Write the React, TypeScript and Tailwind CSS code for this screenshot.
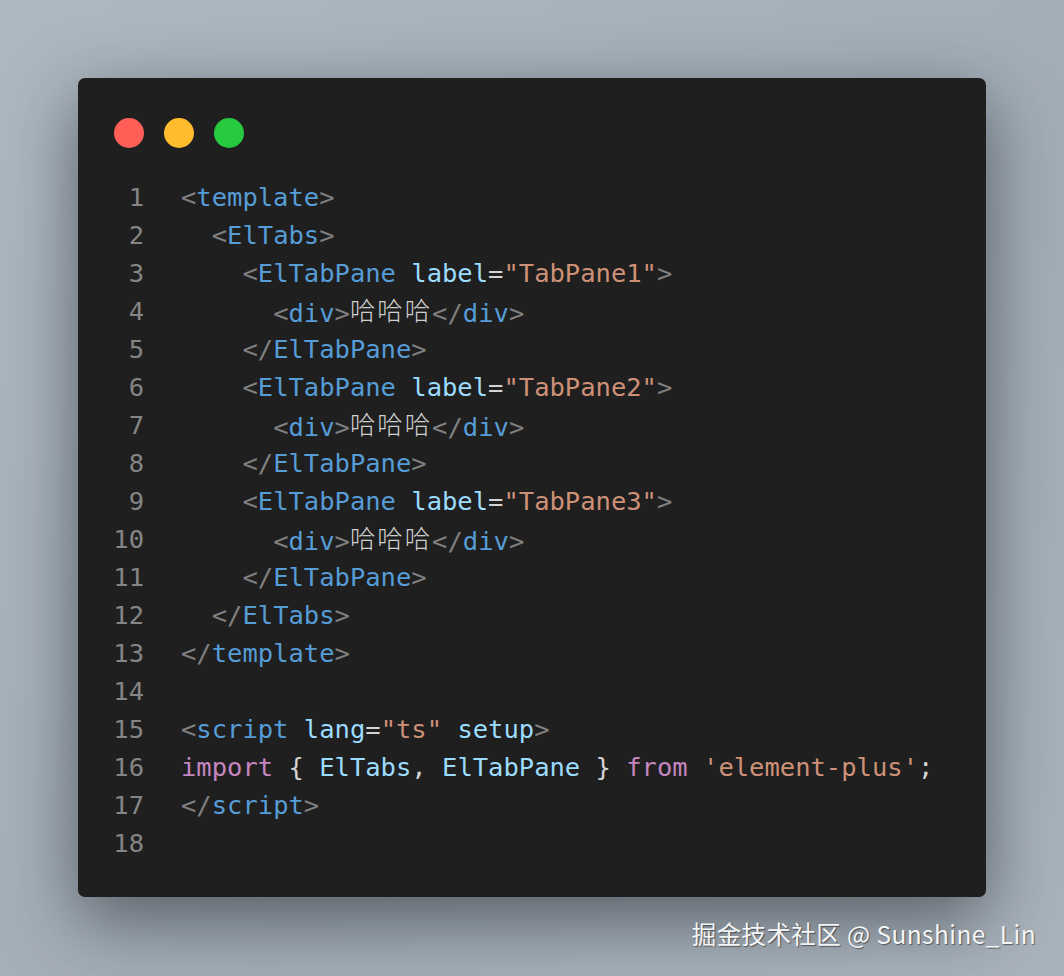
import React from "react";

type Tok = [string, string];

const P = "text-[#808080]"; // punctuation brackets
const T = "text-[#569cd6]"; // tag
const A = "text-[#9cdcfe]"; // attr / variable
const S = "text-[#ce9178]"; // string
const W = "text-[#d4d4d4]"; // plain
const K = "text-[#c586c0]"; // keyword
const C = "cjk"; // chinese text

const lines: Tok[][] = [
  [[P, "<"], [T, "template"], [P, ">"]],
  [[W, "  "], [P, "<"], [T, "ElTabs"], [P, ">"]],
  [[W, "    "], [P, "<"], [T, "ElTabPane"], [W, " "], [A, "label"], [W, "="], [S, "\"TabPane1\""], [P, ">"]],
  [[W, "      "], [P, "<"], [T, "div"], [P, ">"], [C, "哈哈哈"], [P, "</"], [T, "div"], [P, ">"]],
  [[W, "    "], [P, "</"], [T, "ElTabPane"], [P, ">"]],
  [[W, "    "], [P, "<"], [T, "ElTabPane"], [W, " "], [A, "label"], [W, "="], [S, "\"TabPane2\""], [P, ">"]],
  [[W, "      "], [P, "<"], [T, "div"], [P, ">"], [C, "哈哈哈"], [P, "</"], [T, "div"], [P, ">"]],
  [[W, "    "], [P, "</"], [T, "ElTabPane"], [P, ">"]],
  [[W, "    "], [P, "<"], [T, "ElTabPane"], [W, " "], [A, "label"], [W, "="], [S, "\"TabPane3\""], [P, ">"]],
  [[W, "      "], [P, "<"], [T, "div"], [P, ">"], [C, "哈哈哈"], [P, "</"], [T, "div"], [P, ">"]],
  [[W, "    "], [P, "</"], [T, "ElTabPane"], [P, ">"]],
  [[W, "  "], [P, "</"], [T, "ElTabs"], [P, ">"]],
  [[P, "</"], [T, "template"], [P, ">"]],
  [],
  [[P, "<"], [T, "script"], [W, " "], [A, "lang"], [W, "="], [S, "\"ts\""], [W, " "], [A, "setup"], [P, ">"]],
  [[K, "import"], [W, " { "], [A, "ElTabs"], [W, ", "], [A, "ElTabPane"], [W, " } "], [K, "from"], [W, " "], [S, "'element-plus'"], [W, ";"]],
  [[P, "</"], [T, "script"], [P, ">"]],
  [],
];

export default function App() {
  return (
    <div className="relative w-[1064px] h-[976px] overflow-hidden bg-[linear-gradient(135deg,#aeb8c1_0%,#a3adb7_60%,#a9b3bc_100%)] pt-[78px] pl-[78px]">
      <div className="w-[908px] h-[819px] rounded-[7px] bg-[#1f1f1f] shadow-[0_22px_70px_rgba(20,25,32,0.55)]">
        <div className="flex gap-[20px] pl-[36px] pt-[40px]">
          <div className="w-[30px] h-[30px] rounded-full bg-[#ff5f56]" />
          <div className="w-[30px] h-[30px] rounded-full bg-[#ffbd2e]" />
          <div className="w-[30px] h-[30px] rounded-full bg-[#27c93f]" />
        </div>
        <div
          className="flex mt-[30px] text-[25.5px] leading-[38px] whitespace-pre"
          style={{ fontFamily: '"DejaVu Sans Mono", "Liberation Mono", "Noto Sans CJK SC", monospace' }}
        >
          <div className="w-[66px] text-right text-[#858585]">
            {lines.map((_, i) => (
              <div key={i}>{i + 1}</div>
            ))}
          </div>
          <div className="pl-[37px]">
            {lines.map((l, i) => (
              <div key={i} className="h-[38px]">
                {l.map(([c, t], j) =>
                  c === C ? (
                    <span
                      key={j}
                      className="relative -top-[2px] text-[#cfcfcf] tracking-[1.9px] font-light"
                      style={{ fontFamily: '"Noto Sans CJK SC", sans-serif' }}
                    >
                      {t}
                    </span>
                  ) : (
                    <span key={j} className={c}>
                      {t}
                    </span>
                  )
                )}
              </div>
            ))}
          </div>
        </div>
      </div>
      <div
        className="absolute right-[28px] top-[915px] text-[24.5px] leading-[38px] tracking-[0.4px] text-[#f4f5f6] [text-shadow:1px_1px_1px_rgba(0,0,0,0.45)]"
        style={{ fontFamily: '"Noto Sans CJK SC", "Noto Sans", sans-serif' }}
      >
        掘金技术社区 @ Sunshine_Lin
      </div>
    </div>
  );
}
